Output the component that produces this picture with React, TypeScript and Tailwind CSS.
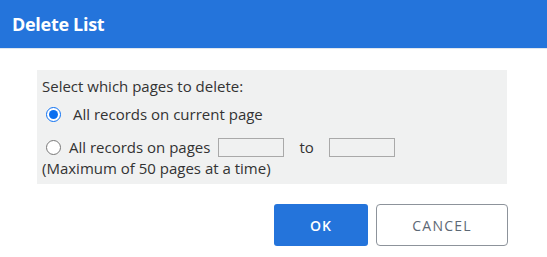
import React from "react";

export default function App() {
  return (
    <div className="w-[547px] h-[257px] bg-white overflow-hidden relative" style={{ fontFamily: '"Open Sans", sans-serif' }}>
      <div className="h-[49px] bg-[#2474db] border-b border-[#dfe6ef] flex items-center pl-[12px]">
        <span className="text-white text-[18px] font-bold tracking-[-0.3px] leading-none">Delete List</span>
      </div>
      <div className="ml-[37px] mt-[21px] w-[470px] bg-[#f0f1f1] pt-[6px] pb-[6px] pl-[5px] text-[15px] text-[#333] leading-[20px]">
        <div className="h-[20px]">Select which pages to delete:</div>
        <div className="mt-[8px] h-[20px] flex items-center">
          <input type="radio" name="p" defaultChecked className="w-[15px] h-[15px] m-0 ml-[4px] accent-[#0b6ff0]" />
          <span className="ml-[12px]">All records on current page</span>
        </div>
        <div className="mt-[12px] h-[22px] flex items-center">
          <input type="radio" name="p" className="w-[15px] h-[15px] m-0 ml-[4px]" />
          <span className="ml-[8px]">All records on pages</span>
          <div className="ml-[8px] w-[66px] h-[19px] border border-[#a9a9a9] bg-[#f0f1f1]" />
          <span className="ml-[15px]">to</span>
          <div className="ml-[15px] w-[66px] h-[19px] border border-[#a9a9a9] bg-[#f0f1f1]" />
        </div>
        <div className="h-[20px]">(Maximum of 50 pages at a time)</div>
      </div>
      <div className="mt-[20px] w-[508px] flex justify-end gap-[8px]">
        <button className="w-[94px] h-[42px] rounded-[3px] bg-[#2474db] text-white text-[14px] font-semibold tracking-[1px]">OK</button>
        <button className="w-[132px] h-[42px] rounded-[4px] border border-[#8d939b] bg-white text-[#5d6875] text-[14px] tracking-[1.2px]">CANCEL</button>
      </div>
    </div>
  );
}
